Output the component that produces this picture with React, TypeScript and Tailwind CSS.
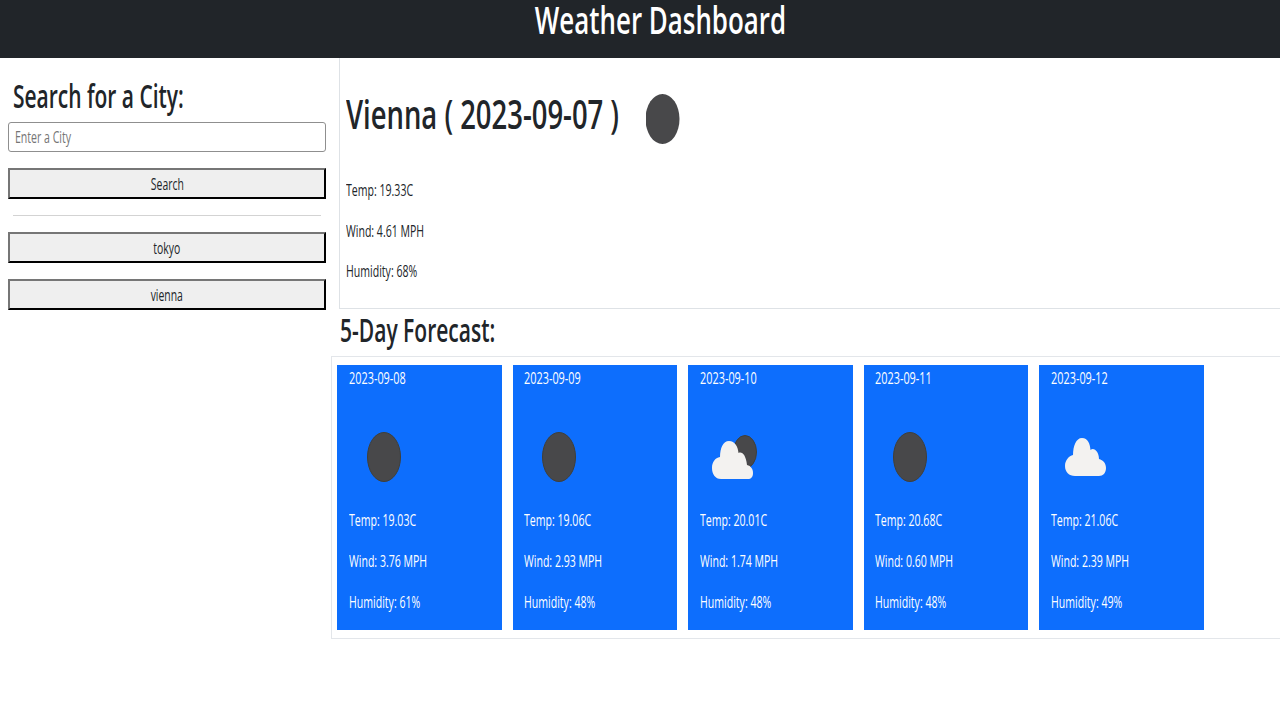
import type { ReactNode } from 'react'

type Day = { date: string; temp: string; wind: string; humidity: string; icon: 'moon' | 'mixed' | 'cloud' }

const days: Day[] = [
  { date: '2023-09-08', temp: '19.03', wind: '3.76', humidity: '61', icon: 'moon' },
  { date: '2023-09-09', temp: '19.06', wind: '2.93', humidity: '48', icon: 'moon' },
  { date: '2023-09-10', temp: '20.01', wind: '1.74', humidity: '48', icon: 'mixed' },
  { date: '2023-09-11', temp: '20.68', wind: '0.60', humidity: '48', icon: 'moon' },
  { date: '2023-09-12', temp: '21.06', wind: '2.39', humidity: '49', icon: 'cloud' },
]

// the screenshot's type is squeezed sideways, so narrow it without touching layout
function Narrow({ children, scale = 'scale-x-[0.66]' }: { children: ReactNode; scale?: string }) {
  return <span className={`inline-block origin-left whitespace-nowrap ${scale}`}>{children}</span>
}

function WeatherIcon({ kind }: { kind: Day['icon'] }) {
  return (
    <svg viewBox="0 0 60 70" className="h-[70px] w-[60px]">
      {kind === 'moon' && <ellipse cx="24" cy="35" rx="16.5" ry="24.5" fill="#48484a" stroke="#3f3f3a" strokeWidth="1" />}
      {kind === 'mixed' && (
        <>
          <ellipse cx="34" cy="30" rx="11.5" ry="16.5" fill="#48484a" stroke="#3f3f3a" strokeWidth="1" />
          <path d="M10 57 C4 57 1 52 1 46 C1 40 4 36 9 35 C9 26 12 19 18 19 C24 19 27 25 27.5 31 C31 29 35 33 36 43 C40 44 42 47 42 51 C42 55 40 57 37 57 Z" fill="#f3f2f0" />
        </>
      )}
      {kind === 'cloud' && (
        <path d="M13 54 C7 54 3 50 3 44 C3 38 7 34 11 33 C11 24 14 16 20 16 C26 16 28 22 28.5 28 C32 25 37 30 37 37 C41 38 44 41 44 46 C44 51 41 54 37 54 Z" fill="#f3f2f0" />
      )}
    </svg>
  )
}

function CityButton({ label }: { label: string }) {
  return (
    <button className="h-[31px] w-full border-2 border-[#767676] border-b-black border-r-black bg-[#efefef] text-center text-base text-[#212529]">
      <span className="inline-block scale-x-[0.65] whitespace-nowrap">{label}</span>
    </button>
  )
}

export default function App() {
  return (
    <div className="min-h-[720px] bg-white font-['Open_Sans',sans-serif] text-[#212529]">
      <header className="h-[58px] bg-[#212529] pl-10 text-center text-white">
        <h1 className="text-[37px] font-semibold leading-[40px]">
          <span className="inline-block scale-x-[0.7] whitespace-nowrap">Weather Dashboard</span>
        </h1>
      </header>

      <div className="flex">
        <aside className="w-[339px] shrink-0 pl-2 pr-[13px]">
          <h2 className="ml-[5px] mt-[18px] text-[32px] font-semibold leading-[40px]">
            <Narrow scale="scale-x-[0.655]">Search for a City:</Narrow>
          </h2>
          <div className="mt-[6px] flex h-[30px] items-center rounded-[3px] border border-[#8f8f8f] px-[6px] text-base text-[#757575]">
            <Narrow>Enter a City</Narrow>
          </div>
          <div className="mt-4">
            <CityButton label="Search" />
          </div>
          <hr className="mx-[5px] mb-4 mt-4 border-t border-[#d3d3d3]" />
          <div className="flex flex-col gap-4">
            <CityButton label="tokyo" />
            <CityButton label="vienna" />
          </div>
        </aside>

        <main className="min-w-0 flex-1">
          <section className="h-[251px] border-b border-l border-[#dee2e6] pl-[6px]">
            <div className="flex h-[114px] items-center pb-[3px]">
              <h2 className="w-[300px] text-[39px] font-semibold leading-[44px]">
                <Narrow scale="scale-x-[0.703]">Vienna ( 2023-09-07 )</Narrow>
              </h2>
              <svg viewBox="0 0 40 54" className="mt-[10px] h-[54px] w-10">
                <ellipse cx="16.500" cy="27" rx="17" ry="25" fill="#48484a" />
              </svg>
            </div>
            <div className="flex flex-col gap-[16.7px] pt-[6px] text-base leading-6">
              <p><Narrow>Temp: 19.33C</Narrow></p>
              <p><Narrow>Wind: 4.61 MPH</Narrow></p>
              <p><Narrow>Humidity: 68%</Narrow></p>
            </div>
          </section>

          <h2 className="mt-px pl-px text-[32px] font-semibold leading-[40px]">
            <Narrow scale="scale-x-[0.657]">5-Day Forecast:</Narrow>
          </h2>
        </main>
      </div>

      <section className="ml-[331px] mt-[6px] flex h-[283px] gap-[11px] border-y border-l border-[#e3e6ea] pl-[5px] pt-2">
        {days.map((day) => (
          <article key={day.date} className="h-[265px] w-[164.5px] bg-[#0d6efd] pl-[11.6px] text-base leading-6 text-white">
            <p className="pt-px"><Narrow scale="scale-x-[0.68]">{day.date}</Narrow></p>
            <div className="ml-[11px] mt-[32px] h-[70px]"><WeatherIcon kind={day.icon} /></div>
            <div className="mt-[16px] flex flex-col gap-[17px]">
              <p><Narrow>Temp: {day.temp}C</Narrow></p>
              <p><Narrow>Wind: {day.wind} MPH</Narrow></p>
              <p><Narrow>Humidity: {day.humidity}%</Narrow></p>
            </div>
          </article>
        ))}
      </section>
    </div>
  )
}
